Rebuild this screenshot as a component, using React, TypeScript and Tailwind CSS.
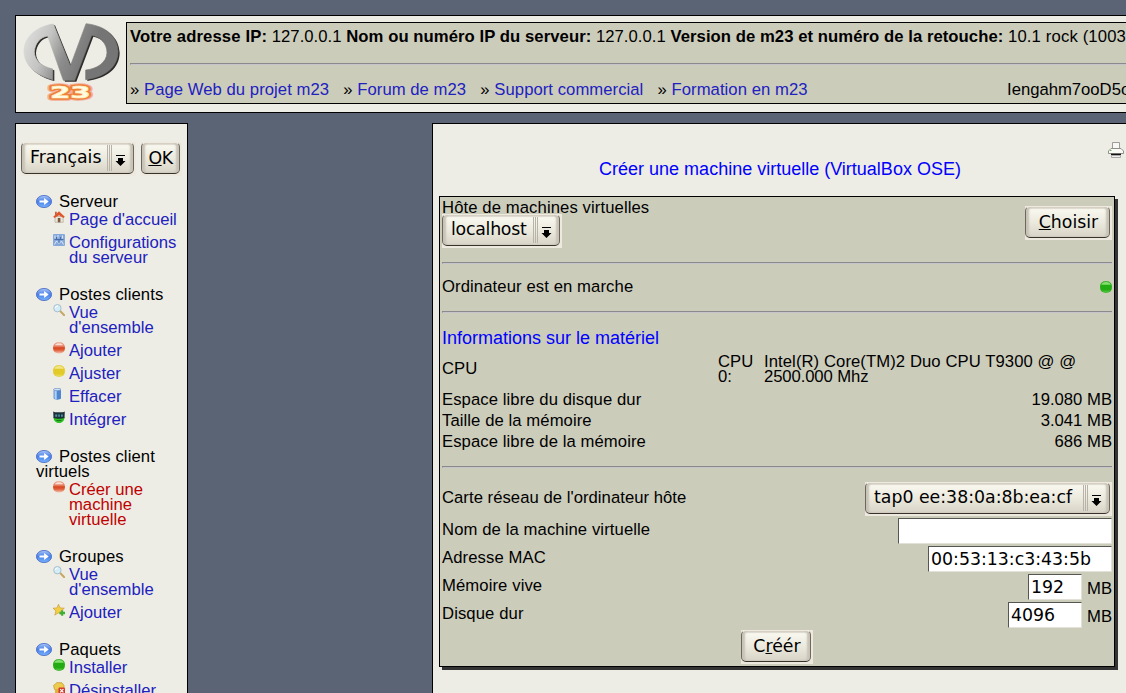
import type { ReactNode } from "react";

function Logo() {
  const shape =
    "M160,72 C105,80 70,115 72,157 C75,200 110,226 158,239 L158,207 C122,198 103,180 103,155 C105,130 120,112 143,108 L190,241 L224,241 L275,106 C300,110 321,130 321,158 C320,188 290,207 257,210 L257,239 C318,230 353,200 354,155 C352,110 320,78 258,71 L211,198 Z";
  return (
    <svg width="110" height="96" viewBox="48 48 330 288" className="block shrink-0">
      <defs>
        <linearGradient id="metal" gradientUnits="userSpaceOnUse" x1="80" y1="90" x2="270" y2="170">
          <stop offset="0" stopColor="#dededc" />
          <stop offset="0.35" stopColor="#c4c4c2" />
          <stop offset="0.65" stopColor="#8c8c8c" />
          <stop offset="1" stopColor="#757575" />
        </linearGradient>
      </defs>
      <path d={shape} transform="translate(5 4)" fill="#2e2c2b" />
      <path d={shape} fill="url(#metal)" stroke="url(#metal)" strokeWidth="2" />
      <g fontSize="48" fontWeight="bold" fontFamily="DejaVu Sans" strokeLinejoin="round">
        <text x="150" y="295" textLength="122" lengthAdjust="spacingAndGlyphs" fill="none" stroke="#f3b09a" strokeWidth="16">23</text>
        <text x="150" y="295" textLength="122" lengthAdjust="spacingAndGlyphs" fill="none" stroke="#ee7f3c" strokeWidth="10">23</text>
        <text x="150" y="295" textLength="122" lengthAdjust="spacingAndGlyphs" fill="#fffbe6" stroke="#fdf0b8" strokeWidth="2">23</text>
      </g>
    </svg>
  );
}

function HeadIcon() {
  return (
    <svg width="16" height="13" viewBox="0 0 16 13" className="inline-block align-[-1px] mr-[7px]">
      <defs>
        <linearGradient id="orb" x1="0" y1="0" x2="0" y2="1">
          <stop offset="0" stopColor="#a9c6fa" />
          <stop offset="0.5" stopColor="#4a80e8" />
          <stop offset="1" stopColor="#79b4ff" />
        </linearGradient>
      </defs>
      <ellipse cx="8" cy="6.5" rx="7.6" ry="6.1" fill="url(#orb)" stroke="#3c62c0" strokeWidth="0.8" />
      <path d="M3.5 5.400h4.600V3l4.600 3.500L8.100 10V7.600H3.500z" fill="#fff" />
    </svg>
  );
}

type IconName = "home" | "config" | "search" | "red" | "yellow" | "green" | "bin" | "integrate" | "star" | "remove";

function Ball({ dark, light }: { dark: string; light: string }) {
  return (
    <g>
      <rect x="0.1" y="0.3" width="11.8" height="11.4" rx="5" fill={dark} />
      <path d="M1.300 3.800C1.600 2 3.200 .9 6 .9s4.400 1.100 4.700 2.900z" fill={light} />
      <path d="M1.500 9.500h9c-.9 1.400-2.500 2-4.500 2s-3.600-.6-4.500-2z" fill={light} opacity="0.4" />
    </g>
  );
}

function ItemIcon({ name }: { name: IconName }) {
  return (
    <svg width="12" height="12" viewBox="0 0 12 12" className="-mt-px mr-1 shrink-0">
      {name === "home" && (
        <g>
          <path d="M2 5.500h8.200v5.800H2z" fill="#e9e3d8" stroke="#a9a294" strokeWidth="0.6" />
          <path d="M6 .3 11.800 5.800l-1.400 1.200L6 4.200 1.600 7 .2 5.800z" fill="#e0562c" />
          <path d="M2 .8h1.800v2.400L2 4.800z" fill="#c4603a" />
          <path d="M4.800 7h2.600v4.300H4.800z" fill="#7a5a40" />
        </g>
      )}
      {name === "config" && (
        <g>
          <rect x="0" y="0" width="12" height="12" rx="1" fill="#86a9dc" />
          <path d="M2 1.500v3M5 1v2.500M9.500 1.500v3M1.500 10.500l2-3.500 2.500 2.500L8.500 7l2 3.500" fill="none" stroke="#dce8f8" strokeWidth="1" />
          <path d="M1.500 5.500h9M3.500 3v3M7.500 3v3M6 6v3" stroke="#4b6ea8" strokeWidth="1" />
        </g>
      )}
      {name === "search" && (
        <g>
          <path d="m7.200 7 4 4.200" stroke="#c9a765" strokeWidth="2" strokeLinecap="round" />
          <circle cx="4.400" cy="4.200" r="3.700" fill="#d3eef8" stroke="#a9bccb" strokeWidth="1" />
          <path d="M2.200 4a2.300 2.300 0 0 1 2.500-2" stroke="#fff" fill="none" />
        </g>
      )}
      {name === "red" && (
        <g>
          <defs>
            <linearGradient id="redBall" x1="0" y1="0" x2="0" y2="1">
              <stop offset="0" stopColor="#e9a48e" />
              <stop offset="0.35" stopColor="#e78468" />
              <stop offset="0.5" stopColor="#d84420" />
              <stop offset="0.7" stopColor="#e0603a" />
              <stop offset="1" stopColor="#f3c6b4" />
            </linearGradient>
          </defs>
          <rect x="0.100" y="0.300" width="11.800" height="11.200" rx="5" fill="url(#redBall)" />
          <path d="M2 3.200C2.500 1.700 4 1.200 6 1.200s3.500.5 4 2z" fill="#f7ddd4" />
        </g>
      )}
      {name === "yellow" && <Ball dark="#e2cb28" light="#f1e58a" />}
      {name === "green" && <Ball dark="#22ab12" light="#85df70" />}
      {name === "bin" && (
        <g>
          <path d="M.6 1.500v9c1 1.500 6.400 1.500 7.400 0v-9z" fill="#4e86d2" />
          <path d="M1.500 2v8.500c.6.500 1.500.8 2.200.8V2z" fill="#b4d2f4" />
          <ellipse cx="4.300" cy="1.500" rx="3.700" ry="1.200" fill="#cfe1f5" stroke="#4570b0" strokeWidth="0.500" />
        </g>
      )}
      {name === "integrate" && (
        <g>
          <path d="M.5 6h11c0 3.500-2 6-5.500 6S.5 9.500.5 6z" fill="#2fc026" />
          <path d="M.2.5 2 1.200h8L11.800.5 11.500 7C9 8 3 8 .5 7z" fill="#1c3038" />
          <path d="M2.200 3.500h2v2.200h-2zM5.200 3.500h1.600v2.200H5.200zM8 3.500h1.800v2.200H8z" fill="#4f93a8" />
          <path d="M3.500 9.500h5" stroke="#167a14" />
        </g>
      )}
      {name === "star" && (
        <g>
          <path d="m5.500.3 1.600 3.600 4.200.3-3.200 2.700 1.100 4.200-3.700-2.300-3.700 2.300 1.100-4.200L0 4.200l4-.3z" fill="#f2cf45" stroke="#c7922a" strokeWidth="0.600" />
          <path d="M6.500 7.800h1.700V6.300h2v1.500H12v2.400h-1.800v1.500h-2v-1.500H6.500z" fill="#3fae35" />
        </g>
      )}
      {name === "remove" && (
        <g>
          <path d="M.5 3.500 4 .5l5 .3 2 2.500v3L7 8 1.500 7.500z" fill="#eccb4e" stroke="#b98e2c" strokeWidth="0.600" />
          <path d="M2 7h4v5H2z" fill="#e0b23c" />
          <rect x="5.500" y="5.500" width="6.500" height="6.500" rx="1" fill="#d6382c" />
          <path d="m7.200 7.200 3.200 3.200m0-3.200-3.200 3.200" stroke="#fff" strokeWidth="1.200" />
        </g>
      )}
    </svg>
  );
}

function Item({ icon, active, children }: { icon: IconName; active?: boolean; children: ReactNode }) {
  return (
    <li className="flex items-start pl-[17px]">
      <ItemIcon name={icon} />
      <a className={active ? "text-[#c00000]" : "text-[#2121c0]"}>{children}</a>
    </li>
  );
}

function Group({ title, children }: { title: ReactNode; children: ReactNode }) {
  return (
    <section className="mb-[22px]">
      <h2 className="mb-[3px] tracking-[0.12px]">
        <HeadIcon />
        {title}
      </h2>
      <ul className="flex flex-col gap-2">{children}</ul>
    </section>
  );
}

function Bevel({ className, children }: { className: string; children: ReactNode }) {
  return (
    <div className="shrink-0 bg-[#eee9df] pr-[2px] pb-[2px]">
      <div
        className={`flex h-8 items-center rounded-[5px] border border-t-[#efeae0] border-r-[#6d675e] border-b-[#38322d] border-l-[#6d675e] bg-linear-to-b from-[#fbfaf2] via-[#eceade] to-[#d8d4c7] font-['DejaVu_Sans',sans-serif] text-[17.33px] leading-5 shadow-[inset_3px_0_2px_#c8c3b7,inset_-3px_0_2px_#c8c3b7,inset_0_2px_1px_#e0dccf] ${className}`}
      >
        {children}
      </div>
    </div>
  );
}

function Select({ label, className }: { label: string; className: string }) {
  return (
    <Bevel className={`justify-between pl-2 ${className}`}>
      <span className="-mt-[2px] whitespace-nowrap">{label}</span>
      <svg width="28" height="28" viewBox="0 0 28 28" className="shrink-0">
        <path d="M2.500 1v26M4.500 1v26M6.500 1v26" stroke="#b7b3a8" strokeWidth="1" />
        <path d="M11 11.500h9" stroke="#000" strokeWidth="1" />
        <path d="M13 14h5v3h2.500L15.500 22 10.500 17H13z" fill="#000" />
      </svg>
    </Bevel>
  );
}

function Field({ value, className }: { value: string; className: string }) {
  return (
    <input
      defaultValue={value}
      className={`block h-[26px] rounded-none border border-t-[#555551] border-r-[#e3e0d8] border-b-[#e3e0d8] border-l-[#555551] bg-white pl-[2px] font-['DejaVu_Sans',sans-serif] text-[17.33px] leading-5 outline-none ${className}`}
    />
  );
}

function Rule() {
  return <div className="h-[2px] shrink-0 border-t border-b border-l border-t-[#8a8a8c] border-b-[#c6c4cb] border-l-[#8a8a8c]" />;
}

function TopLink({ children }: { children: ReactNode }) {
  return (
    <span className="mr-[14.2px] tracking-[0.05px]">
      » <a className="text-[#2121c0]">{children}</a>
    </span>
  );
}

function InfoRow({ label, value }: { label: string; value: string }) {
  return (
    <div className="flex h-[21px] justify-between">
      <span className="tracking-[0.08px]">{label}</span>
      <span>{value}</span>
    </div>
  );
}

function FormRow({ label, unit, children }: { label: string; unit?: string; children: ReactNode }) {
  return (
    <div className="flex h-7 items-start">
      <span className="grow pt-1 tracking-[0.1px]">{label}</span>
      {children}
      {unit && <span className="w-[30px] pt-[7px] text-right">{unit}</span>}
    </div>
  );
}

export default function App() {
  return (
    <div className="h-[693px] w-[1126px] overflow-hidden bg-[#5b6475] pt-[15px] pl-[15px] font-['Liberation_Sans',Arial,sans-serif] text-[16.67px] leading-[15px] text-black">
      <header className="flex h-[98px] w-[1130px] border border-black bg-[#eeede5]">
        <Logo />
        <div className="mt-[6px] flex h-[82px] grow flex-col border border-black bg-[#ccccbb] pl-[3px] whitespace-nowrap">
          <p className="mt-[6px] h-[34px] tracking-[0.04px]">
            <b className="tracking-[0.13px]">Votre adresse IP:</b> 127.0.0.1{" "}
            <b className="tracking-[0.07px]">Nom ou numéro IP du serveur:</b> 127.0.0.1{" "}
            <b className="tracking-[0.06px]">Version de m23 et numéro de la retouche:</b>{" "}
            <span className="tracking-[0.15px]">10.1 rock (1003</span>
          </p>
          <Rule />
          <div className="mt-[17px] flex">
            <div className="w-[877px]">
              <TopLink>Page Web du projet m23</TopLink>
              <TopLink>Forum de m23</TopLink>
              <TopLink>Support commercial</TopLink>
              <TopLink>Formation en m23</TopLink>
            </div>
            <span>Iengahm7ooD5o</span>
          </div>
        </div>
      </header>

      <div className="mt-[10px] flex items-start">
        <nav className="h-[600px] w-[173px] shrink-0 border border-black bg-[#eeede5] pt-[18px]">
          <div className="flex gap-[5px] pl-[5px]">
            <Select label="Français" className="w-[113px]" />
            <Bevel className="w-[39px] justify-center">
              <span className="tracking-[-0.4px]">
                <u>O</u>K
              </span>
            </Bevel>
          </div>
          <div className="mt-[18px] pr-1 pl-5">
            <Group title="Serveur">
              <Item icon="home">Page d'accueil</Item>
              <Item icon="config">
                Configurations
                <br />
                du serveur
              </Item>
            </Group>
            <Group title="Postes clients">
              <Item icon="search">
                Vue
                <br />
                d'ensemble
              </Item>
              <Item icon="red">Ajouter</Item>
              <Item icon="yellow">Ajuster</Item>
              <Item icon="bin">Effacer</Item>
              <Item icon="integrate">Intégrer</Item>
            </Group>
            <Group
              title={
                <>
                  Postes client
                  <br />
                  virtuels
                </>
              }
            >
              <Item icon="red" active>
                Créer une
                <br />
                machine
                <br />
                virtuelle
              </Item>
            </Group>
            <Group title="Groupes">
              <Item icon="search">
                Vue
                <br />
                d'ensemble
              </Item>
              <Item icon="star">Ajouter</Item>
            </Group>
            <Group title="Paquets">
              <Item icon="green">Installer</Item>
              <Item icon="remove">Désinstaller</Item>
            </Group>
          </div>
        </nav>

        <main className="ml-[244px] h-[600px] w-[710px] shrink-0 border border-black bg-[#eeede5] pl-[6px]">
          <div className="flex h-[72px] w-[687px] items-start pt-[18px]">
            <h1 className="w-[669px] pt-[17px] pl-[13px] text-center text-[18px] leading-5 whitespace-nowrap text-[#0000ff]">
              Créer une machine virtuelle (VirtualBox OSE)
            </h1>
            <svg width="16" height="16" viewBox="0 0 16 16" className="shrink-0">
              <path d="M4.500.5h7v6h-7z" fill="#f7f7f4" stroke="#9c9c98" />
              <path d="M3 6.500h10l2.500 2.500v2.500h-15V9z" fill="#fafaf7" stroke="#8f8f8b" />
              <path d="M3 12.500h10" stroke="#111" strokeWidth="1.500" />
              <path d="M3.500 13.500h9v2h-9z" fill="#eee" stroke="#aaa" />
              <path d="M2 8.500h1.500" stroke="#5abc4e" />
            </svg>
          </div>

          <div className="flex h-[471px] w-[676px] flex-col border border-black bg-[#ccccbb] px-[2px] shadow-[3px_3px_0_#333333]">
            <div className="flex h-[65px] items-start justify-between">
              <div className="flex flex-col items-start pt-[3px]">
                <span className="h-[14px] tracking-[0.1px]">Hôte de machines virtuelles</span>
                <Select label="localhost" className="w-[118px] tracking-[-0.25px]" />
              </div>
              <div className="pt-[9px]">
                <Bevel className="w-[85px] justify-center pl-[2px]">
                  <span>
                    <u>C</u>hoisir
                  </span>
                </Bevel>
              </div>
            </div>
            <Rule />
            <div className="flex h-[47px] justify-between pt-[15px]">
              <span className="tracking-[0.1px]">Ordinateur est en marche</span>
              <svg width="12" height="12" viewBox="0 0 12 12" className="mt-[2px]">
                <Ball dark="#22ab12" light="#85df70" />
              </svg>
            </div>
            <Rule />
            <h2 className="h-[41px] pt-[15px] text-[18px] leading-5 text-[#0000ff]">Informations sur le matériel</h2>
            <div className="flex h-[38px]">
              <span className="w-[276px] pt-[7px]">CPU</span>
              <span className="w-[46px]">
                CPU
                <br />
                0:
              </span>
              <span className="whitespace-nowrap tracking-[0.08px]">
                Intel(R) Core(TM)2 Duo CPU T9300 @ @<br />
                <span className="tracking-[-0.1px]">2500.000 Mhz</span>
              </span>
            </div>
            <InfoRow label="Espace libre du disque dur" value="19.080 MB" />
            <InfoRow label="Taille de la mémoire" value="3.041 MB" />
            <InfoRow label="Espace libre de la mémoire" value="686 MB" />
            <div className="h-[11px]" />
            <Rule />
            <div className="mt-[14px] mb-[2px] flex h-[34px] justify-between">
              <span className="pt-2 tracking-[0.04px]">Carte réseau de l'ordinateur hôte</span>
              <Select label="tap0 ee:38:0a:8b:ea:cf" className="w-[245px]" />
            </div>
            <FormRow label="Nom de la machine virtuelle">
              <Field value="" className="w-[214px]" />
            </FormRow>
            <FormRow label="Adresse MAC">
              <Field value="00:53:13:c3:43:5b" className="w-[184px]" />
            </FormRow>
            <FormRow label="Mémoire vive" unit="MB">
              <Field value="192" className="w-[54px]" />
            </FormRow>
            <FormRow label="Disque dur" unit="MB">
              <Field value="4096" className="w-[74px]" />
            </FormRow>
            <div className="flex justify-center">
              <Bevel className="w-[70px] justify-center pl-[2px]">
                <span>
                  C<u>r</u>éér
                </span>
              </Bevel>
            </div>
          </div>
        </main>
      </div>
    </div>
  );
}
